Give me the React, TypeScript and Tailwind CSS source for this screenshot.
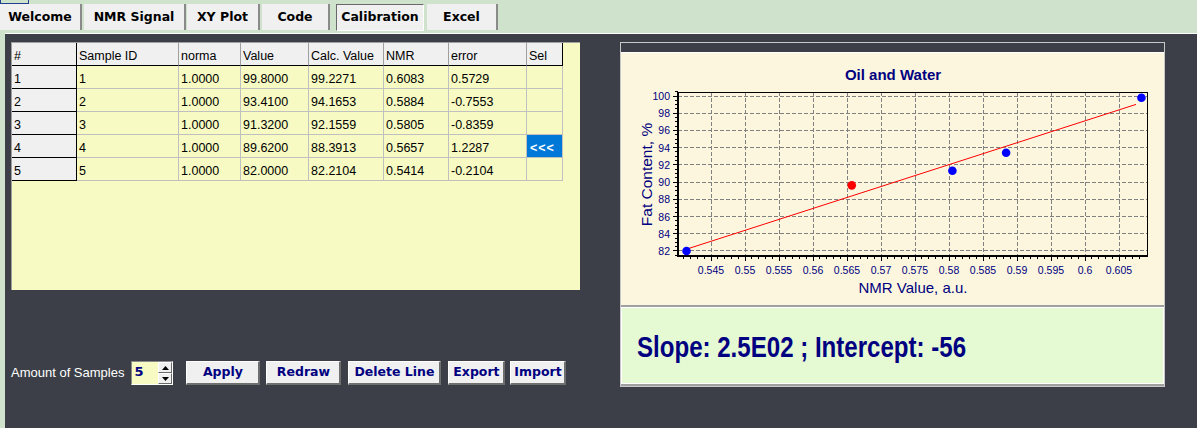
import React from "react";

const tabs = [
  { label: "Welcome", cls: "w-[82px]" },
  { label: "NMR Signal", cls: "ml-[2px] w-[102px]" },
  { label: "XY Plot", cls: "ml-[1px] w-[73px]" },
  { label: "Code", cls: "ml-[2px] w-[68px]" },
];

const headers = ["#", "Sample ID", "norma", "Value", "Calc. Value", "NMR", "error", "Sel"];

const rows = [
  ["1", "1", "1.0000", "99.8000", "99.2271", "0.6083", "0.5729", ""],
  ["2", "2", "1.0000", "93.4100", "94.1653", "0.5884", "-0.7553", ""],
  ["3", "3", "1.0000", "91.3200", "92.1559", "0.5805", "-0.8359", ""],
  ["4", "4", "1.0000", "89.6200", "88.3913", "0.5657", "1.2287", "<<<"],
  ["5", "5", "1.0000", "82.0000", "82.2104", "0.5414", "-0.2104", ""],
];

const buttons = [
  { label: "Apply", cls: "ml-[13px] w-[74px]" },
  { label: "Redraw", cls: "ml-[6px] w-[75px]" },
  { label: "Delete Line", cls: "ml-[7px] w-[93px]" },
  { label: "Export", cls: "ml-[7px] w-[57px]" },
  { label: "Import", cls: "ml-[5px] w-[56px]" },
];

// chart coords are relative to the cream area (page x 621, y 53)
const px = (v: number) => 711 + (v - 0.545) * 6800 - 621;
const py = (v: number) => 96 + (100 - v) * 8.61 - 53;
const L = 57;
const T = 39;
const R = 526;
const B = 203;

const xTicks = Array.from({ length: 13 }, (_, i) => +(0.545 + i * 0.005).toFixed(3));
const yTicks = Array.from({ length: 10 }, (_, i) => 82 + i * 2);

const points = [
  { x: 0.6083, y: 99.8, c: "#0000ff" },
  { x: 0.5884, y: 93.41, c: "#0000ff" },
  { x: 0.5805, y: 91.32, c: "#0000ff" },
  { x: 0.5657, y: 89.62, c: "#ff0000" },
  { x: 0.5414, y: 82.0, c: "#0000ff" },
];

const Chart = () => {
  const xMinor: number[] = [];
  for (let v = 0.541; v < 0.609; v += 0.001) xMinor.push(v);
  const yMinor: number[] = [];
  for (let v = 81.5; v <= 100.5; v += 0.5) yMinor.push(v);
  const fitY = (x: number) => 82.2104 + (x - 0.5414) * 254.36;

  return (
    <svg width="543" height="252" className="block font-['Liberation_Sans',Arial,sans-serif]">
      <text x="272" y="27" textAnchor="middle" fontSize="15" fontWeight="bold" fill="#000080">
        Oil and Water
      </text>
      {xTicks.map((v) => (
        <line key={"gx" + v} x1={px(v)} x2={px(v)} y1={T} y2={B} stroke="#808080" strokeDasharray="4 2" shapeRendering="crispEdges" />
      ))}
      {yTicks.map((v) => (
        <line key={"gy" + v} x1={L} x2={R} y1={py(v)} y2={py(v)} stroke="#808080" strokeDasharray="4 2" shapeRendering="crispEdges" />
      ))}
      {xMinor.map((v, i) => (
        <line key={"mx" + i} x1={px(v)} x2={px(v)} y1={B} y2={B + 3} stroke="#000" shapeRendering="crispEdges" />
      ))}
      {yMinor.map((v, i) => (
        <line key={"my" + i} x1={L - 3} x2={L} y1={py(v)} y2={py(v)} stroke="#000" shapeRendering="crispEdges" />
      ))}
      {xTicks.map((v) => (
        <line key={"tx" + v} x1={px(v)} x2={px(v)} y1={B} y2={B + 5} stroke="#000" shapeRendering="crispEdges" />
      ))}
      {yTicks.map((v) => (
        <line key={"ty" + v} x1={L - 5} x2={L} y1={py(v)} y2={py(v)} stroke="#000" shapeRendering="crispEdges" />
      ))}
      <line x1={L} x2={R} y1={T} y2={T} stroke="#000" shapeRendering="crispEdges" />
      <line x1={R} x2={R} y1={T} y2={B} stroke="#000" shapeRendering="crispEdges" />
      <line x1={L} x2={L} y1={T} y2={B + 1} stroke="#000" strokeWidth="2" shapeRendering="crispEdges" />
      <line x1={L - 1} x2={R + 1} y1={B} y2={B} stroke="#000" strokeWidth="2" shapeRendering="crispEdges" />
      {xTicks.map((v) => (
        <text key={"lx" + v} x={px(v)} y="221" textAnchor="middle" fontSize="10.5" fill="#000080">
          {String(v)}
        </text>
      ))}
      {yTicks.map((v) => (
        <text key={"ly" + v} x="49" y={py(v) + 4} textAnchor="end" fontSize="10.5" fill="#000080">
          {v}
        </text>
      ))}
      <line x1={px(0.5414)} y1={py(fitY(0.5414))} x2={px(0.6075)} y2={py(fitY(0.6075))} stroke="#ff0000" strokeWidth="1" />
      {points.map((p) => (
        <circle key={p.x} cx={px(p.x)} cy={py(p.y)} r="4.3" fill={p.c} />
      ))}
      <text x="292" y="240" textAnchor="middle" fontSize="15" fill="#000080">
        NMR Value, a.u.
      </text>
      <text transform="translate(31 121.5) rotate(-90)" textAnchor="middle" fontSize="15.5" fill="#000080">
        Fat Content, %
      </text>
    </svg>
  );
};

const App = () => {
  return (
    <div className="w-[1197px] h-[428px] bg-[#cfe2cc] overflow-hidden flex flex-col font-['Liberation_Sans',Arial,sans-serif]">
      {/* thin strip on top */}
      <div className="h-[4px] flex">
        <div className="w-[29px] h-[4px] border-x border-b border-[#1f3f8f]" />
      </div>

      {/* tab bar */}
      <div className="h-[26px] flex font-['DejaVu_Sans',sans-serif] font-bold text-[12.5px] text-black">
        {tabs.map((t) => (
          <div key={t.label} className={`${t.cls} h-full bg-[#f0f0f0] border-r-2 border-r-[#8a8a8a] flex items-center justify-center`}>
            {t.label}
          </div>
        ))}
        <div className="ml-[6px] w-[88px] h-[27px] bg-[#f0f0f0] border border-t-[#696969] border-l-[#696969] border-r-white border-b-white flex items-center justify-center">
          Calibration
        </div>
        <div className="ml-[3px] w-[71px] h-full bg-[#f0f0f0] border-r-2 border-r-[#8a8a8a] flex items-center justify-center">
          Excel
        </div>
      </div>

      <div className="h-[3px]" />
      <div className="ml-[5px] flex-1 bg-[#3c3f47] border-t border-white flex pl-[6px] pt-[8px]">
        {/* left column */}
        <div className="w-[569px] flex flex-col">
          <div className="h-[248px] bg-[#f7fbc3] border-t border-l border-[#a0a0a0] text-[12.5px] text-black">
            <div className="grid grid-cols-[65px_102px_62px_68px_75px_65px_78px_36px] w-[551px]">
              {headers.map((h, i) => (
                <div
                  key={h}
                  className={`h-[23px] bg-[#f0f0f0] border-b border-b-black border-r pl-[2px] pt-[4px] ${
                    i === 0 || i === headers.length - 1 ? "border-r-black" : "border-r-[#a0a0a0]"
                  }`}
                >
                  {h}
                </div>
              ))}
              {rows.map((r) =>
                r.map((c, i) => {
                  if (i === 0)
                    return (
                      <div key={r[0] + "-" + i} className="h-[23px] bg-[#f0f0f0] border-b border-r border-black pl-[2px] pt-[4px]">
                        {c}
                      </div>
                    );
                  if (c === "<<<")
                    return (
                      <div key={r[0] + "-" + i} className="h-[23px] border-b border-r border-[#c0c0c0]">
                        <div className="h-full bg-[#0078d7] text-white pl-[3px] pt-[4px] font-bold tracking-[1px]">{c}</div>
                      </div>
                    );
                  return (
                    <div key={r[0] + "-" + i} className="h-[23px] border-b border-r border-[#c0c0c0] pl-[2px] pt-[4px]">
                      {c}
                    </div>
                  );
                })
              )}
            </div>
          </div>

          {/* controls */}
          <div className="mt-[71px] h-[24px] flex items-center">
            <span className="text-white text-[13px]">Amount of Samples</span>
            <div className="ml-[7px] w-[42px] h-[24px] flex border border-t-[#8a8a8a] border-l-[#8a8a8a] border-r-white border-b-white bg-[#f7fbc3]">
              <div className="flex-1 pl-[2px] font-['DejaVu_Sans',sans-serif] font-bold text-[13px] text-[#000080] leading-[20px]">5</div>
              <div className="w-[14px] flex flex-col">
                <div className="h-[11px] bg-[#f0f0f0] border border-t-white border-l-white border-r-[#696969] border-b-[#696969] flex items-center justify-center">
                  <svg width="7" height="4" viewBox="0 0 7 4"><path d="M3.5 0 L7 4 L0 4 Z" fill="#000" /></svg>
                </div>
                <div className="h-[11px] bg-[#f0f0f0] border border-t-white border-l-white border-r-[#696969] border-b-[#696969] flex items-center justify-center">
                  <svg width="7" height="4" viewBox="0 0 7 4"><path d="M0 0 L7 0 L3.5 4 Z" fill="#000" /></svg>
                </div>
              </div>
            </div>
            {buttons.map((b) => (
              <div
                key={b.label}
                className={`${b.cls} h-[24px] bg-[#f0f0f0] border border-t-white border-l-white border-r-2 border-b-2 border-r-[#6e6e6e] border-b-[#6e6e6e] flex items-center justify-center font-['DejaVu_Sans',sans-serif] font-bold text-[12.5px] text-[#000080]`}
              >
                {b.label}
              </div>
            ))}
          </div>
        </div>

        {/* right column: chart */}
        <div className="ml-[40px] w-[545px] self-start border border-[#c8c8c8] bg-[#3c3f47]">
          <div className="h-[10px] border-b border-white bg-[#3c3f47]" />
          <div className="h-[252px] bg-[#fcf6de]">
            <Chart />
          </div>
          <div className="border-y-2 border-[#a0a0a0]">
            <div className="h-[77px] bg-[#e5f9d3] border border-white flex items-center pl-[15px] pt-[4px] font-bold text-[29px] text-[#000080]">
              <span className="inline-block origin-left scale-x-[0.83] whitespace-nowrap">Slope: 2.5E02 ; Intercept: -56</span>
            </div>
          </div>
        </div>
      </div>
    </div>
  );
};

export default App;
